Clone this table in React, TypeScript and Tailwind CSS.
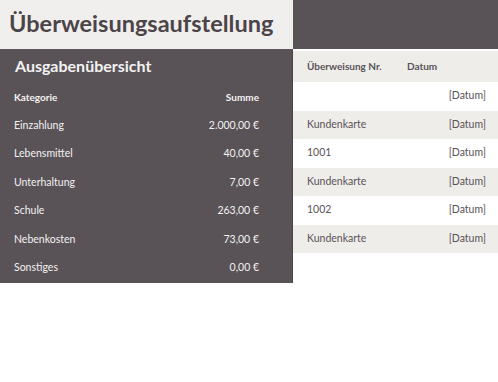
const ausgaben = [
  { kategorie: 'Einzahlung', summe: '2.000,00 €' },
  { kategorie: 'Lebensmittel', summe: '40,00 €' },
  { kategorie: 'Unterhaltung', summe: '7,00 €' },
  { kategorie: 'Schule', summe: '263,00 €' },
  { kategorie: 'Nebenkosten', summe: '73,00 €' },
  { kategorie: 'Sonstiges', summe: '0,00 €' },
];

const ueberweisungen = ['', 'Kundenkarte', '1001', 'Kundenkarte', '1002', 'Kundenkarte'];

export default function App() {
  return (
    <div
      className="h-[382px] w-[498px] bg-white text-[#595358]"
      style={{ fontFamily: 'Lato, "Open Sans", sans-serif' }}
    >
      {/* Title band */}
      <div className="flex h-[49px]">
        <div className="flex w-[293px] items-center bg-[#f1efed] pb-[1px] pl-[9px]">
          <h1 className="text-[23.5px] font-bold text-[#4b4448]">Überweisungsaufstellung</h1>
        </div>
        <div className="flex-1 bg-[#595358]" />
      </div>

      <div className="flex">
        {/* Ausgabenübersicht */}
        <div className="w-[293px] border-r border-[#4a4448] bg-[#595358] text-[#f3f1f1]">
          <div className="flex h-[34px] items-center pl-[15px]">
            <h2 className="text-[16px] font-bold">Ausgabenübersicht</h2>
          </div>
          <div className="flex h-[28.5px] items-center justify-between pl-[14px] pr-[33px] text-[10px] font-bold">
            <span>Kategorie</span>
            <span>Summe</span>
          </div>
          {ausgaben.map((a) => (
            <div
              key={a.kategorie}
              className="flex h-[28.5px] items-center justify-between pl-[14px] pr-[33px] text-[10.5px]"
            >
              <span>{a.kategorie}</span>
              <span>{a.summe}</span>
            </div>
          ))}
        </div>

        {/* Überweisungen */}
        <div className="flex-1 pt-[2px]">
          <div className="flex h-[31px] items-center bg-[#efedea] pl-[14px] text-[10px] font-bold">
            <span className="w-[100px]">Überweisung Nr.</span>
            <span>Datum</span>
          </div>
          {ueberweisungen.map((nr, i) => (
            <div
              key={i}
              className={`flex h-[28.5px] items-center justify-between pl-[14px] pr-[12px] text-[10.5px] ${
                i % 2 === 1 ? 'bg-[#efedea]' : 'bg-white'
              }`}
            >
              <span>{nr}</span>
              <span>[Datum]</span>
            </div>
          ))}
        </div>
      </div>
    </div>
  );
}
